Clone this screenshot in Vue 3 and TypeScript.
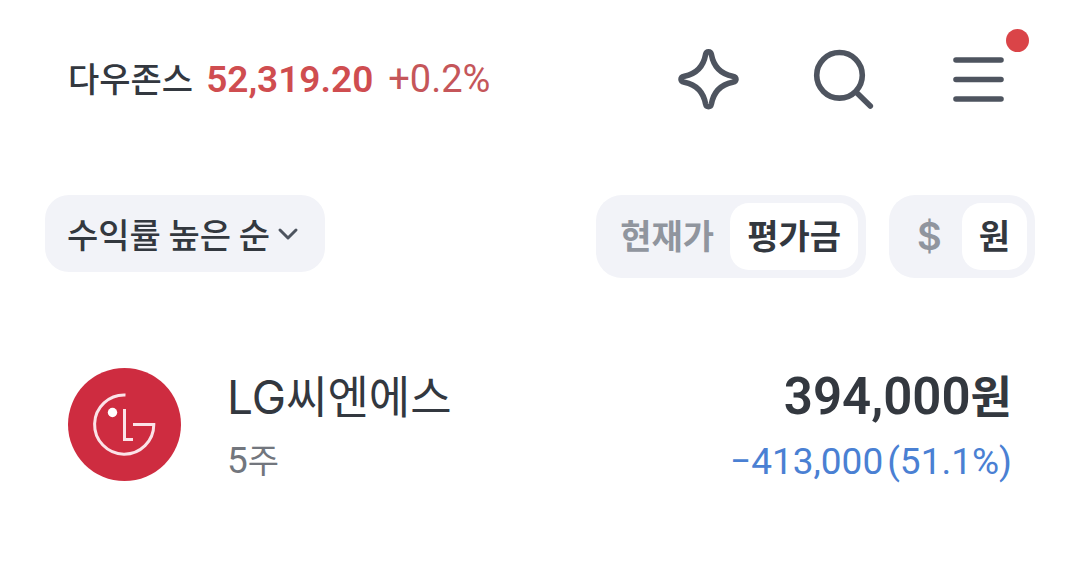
<script setup lang="ts">
import { ref } from 'vue'

interface Option {
  id: string
  label: string
}

interface Holding {
  name: string[]
  shares: number
  amount: string
  change: string
  rate: string
}

const priceModes: Option[] = [
  { id: 'current', label: '현재가' },
  { id: 'value', label: '평가금' },
]
const currencies: Option[] = [
  { id: 'usd', label: '$' },
  { id: 'krw', label: '원' },
]
const priceMode = ref('value')
const currency = ref('krw')

const holdings: Holding[] = [
  { name: ['LG', '씨엔에스'], shares: 5, amount: '394,000', change: '−413,000', rate: '(51.1%)' },
]
</script>

<template>
  <main class="screen">
    <header class="top">
      <a class="ticker" href="#index">
        <span class="ticker-name">다우존스</span>
        <strong class="ticker-value">52,319.20</strong>
        <span class="ticker-rate">+0.2%</span>
      </a>
      <nav class="actions">
        <button class="icon-button" type="button" aria-label="AI">
          <svg viewBox="0 0 72 72" aria-hidden="true">
            <path d="M36.5 8.7 C38 8.7 39 9.6 39.4 11.4 C41.6 23.5 48 30.6 60.6 33.2 C62.8 33.7 64 34.6 64 36.2 C64 37.8 62.8 38.7 60.6 39.2 C48 41.8 41.6 48.9 39.4 61 C39 62.8 38 63.7 36.5 63.7 C35 63.7 34 62.8 33.6 61 C31.4 48.9 25 41.8 12.4 39.2 C10.2 38.7 9 37.8 9 36.2 C9 34.6 10.2 33.7 12.4 33.2 C25 30.6 31.4 23.5 33.6 11.4 C34 9.6 35 8.7 36.5 8.7 Z" />
          </svg>
        </button>
        <button class="icon-button" type="button" aria-label="검색">
          <svg viewBox="0 0 72 72" aria-hidden="true">
            <circle cx="32.5" cy="32.3" r="22.8" />
            <path d="M49 49 L63.3 63" />
          </svg>
        </button>
        <button class="icon-button" type="button" aria-label="메뉴">
          <svg viewBox="0 0 72 72" aria-hidden="true">
            <path d="M14 17 H59 M14 36.5 H59 M14 56 H59" />
          </svg>
          <span class="badge"></span>
        </button>
      </nav>
    </header>

    <section class="filters">
      <button class="sort" type="button">
        <span>수익률 높은 순</span>
        <svg viewBox="0 0 24 24" aria-hidden="true"><path d="M4 8 L12 16 L20 8" /></svg>
      </button>
      <div class="toggles">
        <div class="segment" role="group" aria-label="금액 기준">
          <button
            v-for="mode in priceModes"
            :key="mode.id"
            type="button"
            class="option"
            :class="{ active: priceMode === mode.id }"
            :aria-pressed="priceMode === mode.id"
            @click="priceMode = mode.id"
          >{{ mode.label }}</button>
        </div>
        <div class="segment" role="group" aria-label="통화">
          <button
            v-for="unit in currencies"
            :key="unit.id"
            type="button"
            class="option"
            :class="{ active: currency === unit.id, dollar: unit.id === 'usd' }"
            :aria-pressed="currency === unit.id"
            @click="currency = unit.id"
          >{{ unit.label }}</button>
        </div>
      </div>
    </section>

    <ul class="holdings">
      <li v-for="item in holdings" :key="item.name.join('')" class="holding">
        <svg class="logo" viewBox="0 0 113 113" aria-hidden="true">
          <circle class="logo-disc" cx="56.5" cy="56.5" r="56.5" />
          <path class="logo-line" d="M57.5 27 A29.6 29.6 0 1 0 85.8 56.5 H65" />
          <path class="logo-line" d="M56.5 41 V71.5 H65" />
          <circle class="logo-eye" cx="44.5" cy="44.5" r="4.7" />
        </svg>
        <div class="info">
          <span class="name">{{ item.name[0] }}<span class="name-ko">{{ item.name[1] }}</span></span>
          <span class="shares">{{ item.shares }}<span class="ko">주</span></span>
        </div>
        <div class="money">
          <strong class="amount">{{ item.amount }}<span class="name-ko">원</span></strong>
          <span class="change"><span>{{ item.change }}</span><span>{{ item.rate }}</span></span>
        </div>
      </li>
    </ul>
  </main>
</template>

<style>
body {
  margin: 0;
  background: #fff;
}
</style>

<style scoped>
.screen {
  box-sizing: border-box;
  padding-top: 43px;
  color: #33383f;
  font-family: Roboto, "Noto Sans CJK KR", sans-serif;
  font-size: 38px;
}
button {
  margin: 0;
  padding: 0;
  border: 0;
  background: none;
  color: inherit;
  font: inherit;
  cursor: pointer;
}
svg {
  display: block;
  fill: none;
  stroke: #4e545f;
  stroke-linecap: round;
  stroke-linejoin: round;
}
.top {
  display: flex;
  align-items: center;
  justify-content: space-between;
  padding: 0 66px 0 68px;
}
.ticker {
  display: flex;
  align-items: baseline;
  color: inherit;
  line-height: 48px;
  text-decoration: none;
}
.ticker-name {
  margin-right: 13px;
  font-size: 34px;
  font-weight: 500;
}
.ticker-value {
  margin-right: 15px;
  color: #cf4d50;
  font-size: 37px;
  font-weight: 600;
}
.ticker-rate {
  color: #c5565a;
}
.actions {
  display: flex;
  gap: 63px;
}
.icon-button {
  position: relative;
  width: 72px;
  height: 72px;
}
.icon-button svg {
  width: 72px;
  height: 72px;
  stroke-width: 5.6;
}
.badge {
  position: absolute;
  top: -14px;
  right: -15px;
  width: 23px;
  height: 23px;
  border-radius: 50%;
  background: #da4448;
}
.filters {
  display: flex;
  align-items: flex-start;
  justify-content: space-between;
  padding: 80px 45px 0;
}
.sort {
  display: flex;
  align-items: center;
  gap: 6px;
  height: 77px;
  padding: 0 25px 0 22px;
  border-radius: 24px;
  background: #f2f3f8;
  font-family: "Noto Sans CJK KR", sans-serif;
  font-size: 34px;
  font-weight: 500;
}
.sort svg {
  width: 24px;
  height: 24px;
  stroke-width: 3;
}
.toggles {
  display: flex;
  gap: 23px;
}
.segment {
  display: flex;
  padding: 8px;
  border-radius: 26px;
  background: #f2f3f8;
}
.option {
  height: 67px;
  padding: 0 16px;
  border-radius: 19px;
  color: #90959e;
  font-family: Inter, "Noto Sans CJK KR", sans-serif;
  font-size: 34px;
  font-weight: 600;
  line-height: 67px;
}
.option.active {
  padding: 0 17px;
  background: #fff;
  color: #33383f;
}
.option.dollar {
  padding: 0 20px;
  font-size: 38px;
}
.holdings {
  margin: 0;
  padding: 90px 68px 0;
  list-style: none;
}
.holding {
  display: flex;
  align-items: flex-start;
}
.logo {
  width: 113px;
  height: 113px;
  margin-right: 46px;
}
.logo-disc {
  fill: #ce2c40;
  stroke: none;
}
.logo-line {
  stroke: #fbe3e8;
  stroke-width: 3;
  stroke-linecap: butt;
  stroke-linejoin: miter;
}
.logo-eye {
  fill: #fff;
  stroke: none;
}
.info,
.money {
  display: flex;
  flex: 1;
  flex-direction: column;
  gap: 6px;
  padding-top: 2px;
}
.money {
  align-items: flex-end;
}
.name,
.amount {
  line-height: 54px;
}
.name {
  font-family: Inter, "Noto Sans CJK KR", sans-serif;
  font-size: 46px;
}
.name-ko {
  font-size: 45px;
}
.amount {
  font-size: 51px;
  font-weight: 600;
}
.shares,
.change {
  font-size: 37px;
  line-height: 60px;
}
.shares {
  color: #72767d;
}
.ko {
  font-size: 34px;
}
.change {
  display: flex;
  gap: 4px;
  color: #4a80d3;
}
</style>
